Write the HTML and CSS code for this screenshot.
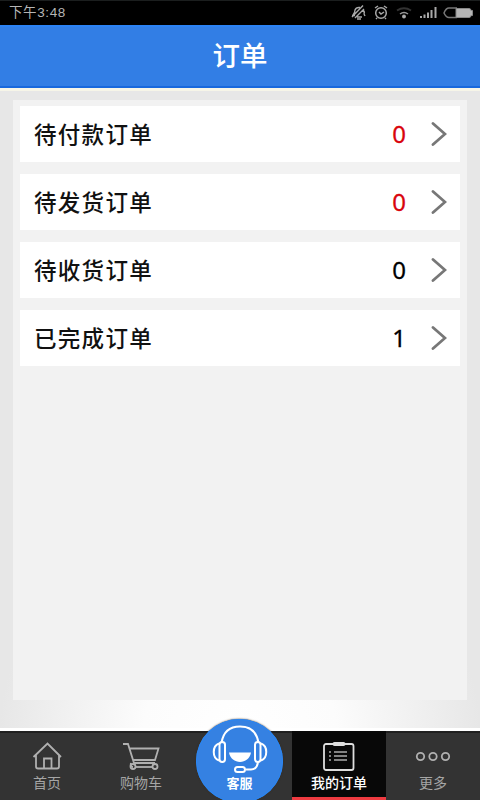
FILE: index.html
```html
<!DOCTYPE html>
<html lang="zh-CN">
<head>
<meta charset="utf-8">
<title>订单</title>
<link rel="stylesheet" href="styles.css">
</head>
<body>
<div class="app">
  <div class="status">
    <span class="time">下午3:48</span>
    <svg class="status-icons" width="130" height="24" viewBox="0 0 130 24" fill="none" stroke="#a8a8a8" stroke-width="1.5">
      <path d="M3 14Q5 12 5 9Q6 6 10 6.500M13 8.500Q15 11 14 13M2 14.500H5M7 16H12M14 13L15 15M2 16L13 4.500M5 17L14 8M7 18H11" stroke-width="1.4"/>
      <circle cx="31" cy="12" r="5.3"/><path d="M25 7L28 5M34 5L37 7M29 11L31 13L34 11M27 17L26 18M35 17L36 18"/>
      <path d="M47 9.500Q54 5 61 9.500" stroke="#333" stroke-width="2"/><path d="M50 13Q54 10 58 13" stroke="#999"/><circle cx="54" cy="15.500" r="1.2" fill="#bbb"/>
      <path d="M71 17V15M74.500 17V13.500M78 17V11.500M81.500 17V9M85.500 17V6" stroke-width="2"/>
      <path d="M107 7H99Q96 7 94 12Q96 16.500 99 16.500H107" stroke="#777"/><path d="M106 7.500H119Q121 7.500 121 9.500H122.500V14.500H121Q121 16.500 119 16.500H106Z" fill="#b5b5b5" stroke="#888" stroke-width="1"/>
    </svg>
  </div>
  <header class="header">订单</header>
  <main class="main">
    <section class="panel">
      <div class="row"><span class="label">待付款订单</span><span class="count due">0</span><svg class="chevron" width="16" height="26" viewBox="0 0 16 26"><path d="M2 2.500L14 13L2 23.500"/></svg></div>
      <div class="row"><span class="label">待发货订单</span><span class="count due">0</span><svg class="chevron" width="16" height="26" viewBox="0 0 16 26"><path d="M2 2.500L14 13L2 23.500"/></svg></div>
      <div class="row"><span class="label">待收货订单</span><span class="count">0</span><svg class="chevron" width="16" height="26" viewBox="0 0 16 26"><path d="M2 2.500L14 13L2 23.500"/></svg></div>
      <div class="row"><span class="label">已完成订单</span><span class="count">1</span><svg class="chevron" width="16" height="26" viewBox="0 0 16 26"><path d="M2 2.500L14 13L2 23.500"/></svg></div>
    </section>
  </main>
  <nav class="nav">
    <a class="tab">
      <svg width="40" height="32" viewBox="0 0 40 32"><path d="M6.500 17L20.500 3.500L34 17M9 15V26.500Q9 28.500 11 28.500H30Q32 28.500 32 26.500V15M17 28V18.500H24.500V28"/></svg>
      <span>首页</span>
    </a>
    <a class="tab">
      <svg width="40" height="32" viewBox="0 0 40 32"><path d="M2 4H7L13 23H34M9 8.500H37.500L34 20H12.500M10 23Q9 27 12 27"/><circle cx="12" cy="26.500" r="2.500"/><circle cx="34" cy="26.500" r="2.500"/><path d="M14.500 27H31.500"/></svg>
      <span>购物车</span>
    </a>
    <a class="tab service">
      <div class="bubble">
        <svg width="60" height="50" viewBox="0 0 60 50" fill="none" stroke="#fff" stroke-width="2">
          <path d="M11.500 19Q14 2.500 30 2.500Q46 2.500 48.500 19"/>
          <rect x="9.500" y="18" width="5.500" height="20" rx="2.700"/><rect x="45" y="18" width="5.500" height="20" rx="2.700"/>
          <path d="M9 19.500C2 22 2 34 9 36.500M51 19.500C58 22 58 34 51 36.500M48 38Q47 45.500 41 45.500H36"/>
          <path d="M19 28.500H41C39 41 21 41 19 28.500Z" fill="#fff" stroke="none"/>
          <rect x="25" y="43" width="10" height="5" rx="2.500"/>
        </svg>
        <span>客服</span>
      </div>
    </a>
    <a class="tab active">
      <svg width="40" height="32" viewBox="0 0 40 32"><rect x="5" y="4" width="29.500" height="26" rx="2"/><path d="M15.500 4H24.500" stroke-width="4" stroke-linecap="round"/><path d="M10 12H12M15 12H28M10 16H12M15 16H28M10 20H12M15 20H28" stroke="#aaa" stroke-width="1.500"/></svg>
      <span>我的订单</span>
    </a>
    <a class="tab">
      <svg width="40" height="32" viewBox="0 0 40 32"><circle cx="7.500" cy="16.500" r="3.700"/><circle cx="20" cy="16.500" r="3.700"/><circle cx="32.500" cy="16.500" r="3.700"/></svg>
      <span>更多</span>
    </a>
  </nav>
</div>
</body>
</html>
```
FILE: styles.css
```css
* { box-sizing: border-box; }
body {
  margin: 0;
  font-family: "Noto Sans CJK SC", sans-serif;
}
.app {
  width: 480px;
  height: 800px;
  display: flex;
  flex-direction: column;
  overflow: hidden;
}
.status {
  height: 25px;
  padding: 0 0 0 9px;
  display: flex;
  align-items: center;
  justify-content: space-between;
  background: #000;
  border-top: 1px solid #1b1e1e;
  color: #b5b5b5;
}
.time {
  font-family: "Liberation Sans", "Noto Sans CJK SC", sans-serif;
  font-size: 13.5px;
  line-height: 22px;
  padding-bottom: 1px;
  letter-spacing: 0.6px;
}
.header {
  height: 63px;
  background: #327ee5;
  border-top: 2px solid #2c83f5;
  border-bottom: 2px solid #1768dd;
  color: #fff;
  font-size: 27.5px;
  font-weight: 500;
  line-height: 55px;
  text-align: center;
}
.main {
  flex: 1;
  padding: 9px 13px 0;
  border-top: 3px solid #f6f5e8;
  border-bottom: 3px solid #fff;
  background: radial-gradient(ellipse 240px 200px at 50% 100%, #fff 0%, #fcfcfc 40%, #e7e7e7 100%);
}
.panel {
  height: 600px;
  padding: 6px 7px;
  display: flex;
  flex-direction: column;
  gap: 12px;
  background: #f2f2f2;
}
.row {
  height: 56px;
  padding: 0 13px 0 14px;
  display: flex;
  align-items: center;
  background: #fff;
}
.label {
  flex: 1;
  font-size: 22.5px;
  font-weight: 500;
  letter-spacing: 1.3px;
  line-height: 55px;
  padding-bottom: 1px;
  color: #111;
}
.count {
  width: 16px;
  margin-right: 24px;
  line-height: 56px;
  text-align: center;
  font-family: "Noto Sans", sans-serif;
  font-size: 24px;
  color: #000;
  -webkit-text-stroke: 0.3px currentColor;
}
.due { color: #d9040c; }
.chevron {
  fill: none;
  stroke: #777;
  stroke-width: 2.8;
  stroke-linecap: round;
}
.nav {
  height: 69px;
  display: grid;
  grid-template-columns: 94px 94px 104px 94px 94px;
  grid-template-rows: 67px;
  background: #333;
  border-top: 2px solid #202020;
}
.tab {
  display: flex;
  flex-direction: column;
  align-items: center;
  padding-top: 7px;
  color: #a5a5a5;
  font-size: 14px;
  line-height: 18px;
}
.tab > svg {
  flex: none;
  fill: none;
  stroke: #b0b0b0;
  stroke-width: 1.8;
}
.tab > span { margin-top: 1px; }
.active {
  margin-top: -2px;
  padding-top: 9px;
  background: #080808;
  border-bottom: 3px solid #ee3a40;
  color: #fff;
  font-weight: 500;
}
.active > svg { stroke: #dedede; }
.service { padding: 0 1px 0 0; }
.bubble {
  width: 87px;
  height: 84px;
  flex: none;
  margin-top: -14px;
  padding-top: 5px;
  display: flex;
  flex-direction: column;
  align-items: center;
  border-radius: 50%;
  background: #3581e2;
  box-shadow: inset 0 0 0 1px #2a86f3, 0 0 2px #3d2c1c;
  color: #fff;
  font-size: 13px;
  font-weight: 700;
}
.bubble svg { flex: none; }
```
